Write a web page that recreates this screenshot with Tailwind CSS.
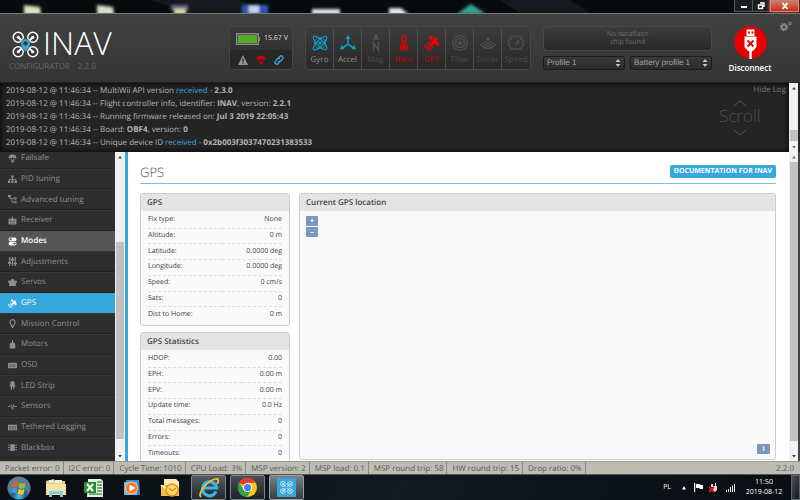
<!DOCTYPE html>
<html lang="en">
<head>
    <meta charset="UTF-8">
    <title>INAV Configurator</title>
    <script src="https://cdn.jsdelivr.net/npm/@tailwindcss/browser@4"></script>
</head>
<body class="h-screen flex flex-col overflow-hidden bg-[#0a0e13] font-['Open_Sans',sans-serif] [text-rendering:geometricPrecision] text-[8px] leading-[12px] text-[#424242]">

    <!-- Shared symbols -->
    <svg class="hidden">
        <symbol id="quad" viewBox="0 0 26 26">
            <g fill="none" stroke="currentColor" stroke-width="1.4">
                <circle cx="6" cy="6" r="4.8"/><circle cx="20" cy="6" r="4.8"/><circle cx="6" cy="20" r="4.8"/><circle cx="20" cy="20" r="4.8"/>
                <path d="M6 6l5 5M20 6l-5 5M6 20l5-5M20 20l-5-5" stroke-width="1.8"/>
            </g>
            <g fill="currentColor"><circle cx="6" cy="6" r="1.5"/><circle cx="20" cy="6" r="1.5"/><circle cx="6" cy="20" r="1.5"/><circle cx="20" cy="20" r="1.5"/></g>
        </symbol>
        <symbol id="satellite" viewBox="0 0 16 16">
            <g fill="currentColor"><path d="M4.500 2.500L7 0l3 3-2.500 2.500zM10.500 8.500L13 6l3 3-2.500 2.500zM6.500 7.500L12 2l2.500 2.500L9 10z"/><path d="M4 6a6 6 0 0 0 6.500 6.500z"/></g>
            <path d="M3 9a4.500 4.500 0 0 0 4 4.500M.7 9.500a6.500 6.500 0 0 0 6 6" fill="none" stroke="currentColor" stroke-width="1.300"/>
        </symbol>
        <symbol id="parachute" viewBox="0 0 16 16">
            <path fill="currentColor" d="M1 6.500C1 3 4 1 8 1s7 2 7 5.500l-1.500 1-1.800-1.200-1.800 1.200L8 6.300 6.100 7.500 4.300 6.300 2.500 7.500z"/>
            <path d="M2 7.500L7 13M14 7.500L9 13M6 8l1.500 5M10 8l-1.500 5" stroke="currentColor" fill="none"/>
            <path fill="currentColor" d="M6 11.500h4V15H6z"/>
        </symbol>
    </svg>

    <!-- Window title bar -->
    <div class="h-[13px] shrink-0 flex justify-end bg-[#080b0e] relative overflow-hidden">
        <svg class="absolute left-0 top-0 w-[800px] h-[13px]" viewBox="0 0 800 13">
            <defs><filter id="soft"><feGaussianBlur stdDeviation="1.500"/></filter></defs>
            <path d="M150 0h90l30 13h-80zM500 0h70l20 13h-70z" fill="#14191e"/>
            <g filter="url(#soft)">
                <path d="M24 5l16 2 1 8H24zM97 5l16 2 1 8H97z" fill="#d3e2c6"/>
                <path d="M171 5h17v5h-17z" fill="#6f6a91"/><path d="M174 9h12v6h-12z" fill="#d5dc9a"/>
                <path d="M242 5h26v9h-26z" fill="#2f55b5"/><path d="M249 5h10v9h-10z" fill="#c5d4f5"/>
                <path d="M312 9h28v6h-28z" fill="#d5e6ed"/>
                <path d="M389 8h12l8 7h-20z" fill="#dce8f2"/>
                <path d="M457 14l14-10 15 10z" fill="#31a69c"/>
            </g>
        </svg>
        <button aria-label="Minimize" class="relative w-[19px] h-3 border border-t-0 border-[#55585b] bg-[#1c1f22] flex items-center justify-center"><svg class="w-2 h-2" viewBox="0 0 8 8"><path d="M1 4h6v2H1z" fill="#fff"/></svg></button>
        <button aria-label="Restore" class="relative w-[17px] h-3 border border-t-0 border-l-0 border-[#55585b] bg-[#1c1f22] flex items-center justify-center"><svg class="w-2 h-2" viewBox="0 0 8 8"><path d="M3 1h4v4M1.500 3h4v3.500h-4z" fill="none" stroke="#fff" stroke-width="1.400"/></svg></button>
        <button aria-label="Close" class="relative w-[29px] h-3 mr-px border border-t-0 border-[#d98a78] bg-linear-to-b from-[#c98374] to-[#c9220c] shadow-[0_0_5px_#e2563c] flex items-center justify-center"><svg class="w-2 h-2" viewBox="0 0 8 8"><path d="M1.500 1l5 6M6.500 1l-5 6" stroke="#fff" stroke-width="1.800"/></svg></button>
    </div>

    <!-- Header -->
    <header class="h-[70px] shrink-0 flex items-start pt-3 pl-3 pr-2 bg-linear-to-b from-[#404240] to-[#343534] border-t border-[#777] border-b border-b-[#222]">
        <div class="flex-1 pt-1">
            <div class="flex items-center gap-1 text-white">
                <svg class="w-[27px] h-[27px]" viewBox="0 0 26 26"><use href="#quad"/><path fill="#37a8db" stroke="#3a3b3a" stroke-width=".6" fill-rule="evenodd" d="M13 7.500a4.600 4.600 0 0 0-4.600 4.600c0 3.300 4.600 8.200 4.600 8.200s4.600-4.900 4.600-8.200A4.600 4.600 0 0 0 13 7.500zm0 2.500a1.900 1.900 0 1 1 0 3.800 1.900 1.900 0 0 1 0-3.800z"/></svg>
                <span class="text-[32px] leading-[28px] font-light">INAV</span>
            </div>
            <div class="-ml-[3px] pt-1 flex gap-2 text-[#6a6a6a] leading-[10px]"><span>CONFIGURATOR</span><span>2.2.0</span></div>
        </div>

        <div class="w-16 h-11 mr-3 rounded bg-linear-to-b from-[#393939] to-[#2a2a2a] border border-[#454545] overflow-hidden">
            <div class="h-6 flex items-center pl-[6px] gap-1 text-[7px] text-[#ddd] whitespace-nowrap">
                <svg class="w-6 h-3 shrink-0" viewBox="0 0 24 12"><path d="M.75.75h21.500v10.500H.75z" fill="#222" stroke="#8b8b8b" stroke-width="1.500"/><path d="M2 2h19v8H2z" fill="#59aa29"/><path d="M22.500 4H24v4h-1.500z" fill="#8b8b8b"/></svg>
                <span>15.67 V</span>
            </div>
            <div class="h-5 -mt-px flex items-center justify-center gap-2 bg-[#272727]">
                <svg class="w-[10px] h-[10px]" viewBox="0 0 10 10"><path d="M5 0l5 10H0z" fill="#929292"/><path d="M5 3.500v3.200M5 7.500v1.300" stroke="#222" stroke-width="1.200"/></svg>
                <svg class="w-[10px] h-[10px] text-[#d40000]"><use href="#parachute"/></svg>
                <svg class="w-[10px] h-[10px]" viewBox="0 0 10 10" fill="none" stroke="#37a8db" stroke-width="1.300"><path d="M4.300 3.200l1.500-1.700a1.800 1.800 0 0 1 2.700 2.600L6.600 6.200a1.800 1.800 0 0 1-2.500-.2M5.700 6.800L4.200 8.500a1.800 1.800 0 0 1-2.700-2.600l1.900-2.100a1.800 1.800 0 0 1 2.500.2"/></svg>
            </div>
        </div>

        <ul class="h-11 mr-3 flex rounded bg-linear-to-b from-[#3c3c3c] to-[#282828] border border-[#484848] divide-x divide-[#4b4b4b] text-[#4b4b4b] text-center overflow-hidden">
            <li class="w-7 flex flex-col items-center pt-2 gap-[3px] text-[#8c8c8c]">
                <svg class="w-4 h-4 shrink-0" viewBox="0 0 16 16" fill="none" stroke="#07a0c8" stroke-width="1.200"><ellipse cx="8" cy="8" rx="3" ry="9" transform="rotate(45 8 8)"/><ellipse cx="8" cy="8" rx="3" ry="9" transform="rotate(-45 8 8)"/><path d="M8 2.500a5.500 5.500 0 0 0 0 11 5.500 5.500 0 0 0 0-11z" stroke-width=".8"/><circle cx="8" cy="8" r="1" fill="#07a0c8"/></svg>Gyro
            </li>
            <li class="w-7 flex flex-col items-center pt-2 gap-[3px] text-[#8c8c8c]">
                <svg class="w-4 h-4 shrink-0" viewBox="0 0 16 16" fill="#07a0c8"><path d="M7.300 3h1.400v6H7.300z"/><path d="M8 0l2.500 4h-5zM0 14.500l1.500-4.500 3 4zM16 14.500l-1.500-4.500-3 4z"/><path d="M2.500 13L8 9l5.500 4" fill="none" stroke="#07a0c8" stroke-width="1.600"/></svg>Accel
            </li>
            <li class="w-7 flex flex-col items-center pt-2 gap-[3px]">
                <svg class="w-4 h-4 shrink-0 overflow-visible" viewBox="0 0 16 16"><path d="M8-2l3.500 6.500h-7z" fill="#4f4f4f"/><path d="M5.500 16V7.500l5 8V7" fill="none" stroke="#4f4f4f" stroke-width="1.500"/></svg>Mag
            </li>
            <li class="w-7 flex flex-col items-center pt-2 gap-[3px] text-[#c40000]">
                <svg class="w-4 h-4 shrink-0" viewBox="0 0 16 16"><path d="M6 9.500V2.200a2 2 0 0 1 4 0v7.300a3.600 3.600 0 1 1-4 0z" fill="none" stroke="#f00000" stroke-width="1.300"/><circle cx="8" cy="12.300" r="2" fill="#f00000"/><path d="M8 5v7" stroke="#f00000" stroke-width="1.200"/></svg>Baro
            </li>
            <li class="w-7 flex flex-col items-center pt-2 gap-[3px] text-[#c40000]">
                <svg class="w-4 h-4 shrink-0 text-[#f00000]"><use href="#satellite"/></svg>GPS
            </li>
            <li class="w-7 flex flex-col items-center pt-2 gap-[3px]">
                <svg class="w-4 h-4 shrink-0" viewBox="0 0 16 16" fill="none" stroke="#4f4f4f"><circle cx="8" cy="8" r="7.200" stroke-width="1.300"/><circle cx="8" cy="8" r="4.500" stroke-width="1.500"/><circle cx="8" cy="8" r="1.800" fill="#4f4f4f"/></svg>Flow
            </li>
            <li class="w-7 flex flex-col items-center pt-2 gap-[3px]">
                <svg class="w-4 h-4 shrink-0" viewBox="0 0 16 16" fill="none" stroke="#4f4f4f" stroke-width="1.400"><path d="M0 8c3.500 7 12.500 7 16 0M2.500 7c2.500 5 8.500 5 11 0M5 6c1.500 3 4.500 3 6 0"/><circle cx="8" cy="4" r="1" fill="#4f4f4f"/></svg>Sonar
            </li>
            <li class="w-7 flex flex-col items-center pt-2 gap-[3px]">
                <svg class="w-4 h-4 shrink-0" viewBox="0 0 16 16" fill="none" stroke="#4f4f4f"><path d="M4 14a7.200 7.200 0 1 1 8 0z" stroke-width="1.400"/><path d="M8 9.500L11 5" stroke-width="2"/><path d="M3 8h1.500M8 2.500V4M4.500 4.500l1 1M11.500 8H13"/></svg>Speed
            </li>
        </ul>

        <div class="w-[169px] mr-[14px] flex flex-col gap-[5px]">
            <div class="h-[25px] rounded border border-[#484848] bg-linear-to-b from-[#3c3c3c] to-[#282828] text-[#6b6b6b] text-[7px] leading-[8px] text-center flex items-center justify-center">No dataflash<br>chip found</div>
            <div class="grid grid-cols-2 gap-[5px]">
                <div class="relative">
                    <select aria-label="Profile" class="block appearance-none w-full h-[14px] pl-[3px] rounded-[2px] border border-[#1c1c1c] bg-linear-to-b from-[#393939] to-[#2b2b2b] text-[#a5a5a5] text-[8px] leading-[12px] font-['Liberation_Sans',sans-serif] [text-rendering:geometricPrecision]"><option>Profile 1</option></select>
                    <svg class="absolute right-1 top-[3px] w-[6px] h-2 pointer-events-none" viewBox="0 0 6 8"><path d="M3 0l2.500 3h-5zM3 8l2.500-3h-5z" fill="#c4c4c4"/></svg>
                </div>
                <div class="relative">
                    <select aria-label="Battery profile" class="block appearance-none w-full h-[14px] pl-[3px] rounded-[2px] border border-[#1c1c1c] bg-linear-to-b from-[#393939] to-[#2b2b2b] text-[#a5a5a5] text-[8px] leading-[12px] font-['Liberation_Sans',sans-serif] [text-rendering:geometricPrecision]"><option>Battery profile 1</option></select>
                    <svg class="absolute right-1 top-[3px] w-[6px] h-2 pointer-events-none" viewBox="0 0 6 8"><path d="M3 0l2.500 3h-5zM3 8l2.500-3h-5z" fill="#c4c4c4"/></svg>
                </div>
            </div>
        </div>

        <button class="w-12 flex flex-col items-center gap-[3px] text-white font-semibold">
            <svg class="w-[33px] h-[33px]" viewBox="0 0 33 33"><circle cx="16.500" cy="16.500" r="16.300" fill="#e60000"/><path d="M12.500 3.500h8V10h-8z" fill="#fff"/><path d="M14 5.500h2v2h-2zM17.500 5.500h2v2h-2z" fill="#e60000"/><path d="M10.500 10.500h12V21l-3.500 4h-5l-3.500-4zM15.300 24h2.500v9h-2.500z" fill="#fff"/><path d="M13.500 14.500l6 6M19.500 14.500l-6 6" stroke="#e60000" stroke-width="1.800"/></svg>
            Disconnect
        </button>
        <button aria-label="Options" class="ml-[6px] -mt-[5px]">
            <svg class="w-3 h-[10px]" viewBox="0 0 12 10" fill="none" stroke="#909090"><circle cx="4" cy="6" r="2.300" stroke-width="1.600"/><circle cx="4" cy="6" r="3.500" stroke-width="1.200" stroke-dasharray="1.400 1.350"/><circle cx="10" cy="2.500" r="1.300"/></svg>
        </button>
    </header>

    <!-- Log -->
    <section class="h-[69px] shrink-0 flex bg-[#242424]">
        <div class="flex-1 flex justify-between pl-[6px] shadow-[inset_0_0_6px_#000]">
            <div class="pt-px text-[#b5b5b5] leading-[13px]">
                <p>2019-08-12 @ 11:46:34 -- MultiWii API version <span class="text-[#37a8db]">received</span> - <b>2.3.0</b></p>
                <p>2019-08-12 @ 11:46:34 -- Flight controller info, identifier: <b>INAV</b>, version: <b>2.2.1</b></p>
                <p>2019-08-12 @ 11:46:34 -- Running firmware released on: <b>Jul 3 2019 22:05:43</b></p>
                <p>2019-08-12 @ 11:46:34 -- Board: <b>OBF4</b>, version: <b>0</b></p>
                <p>2019-08-12 @ 11:46:34 -- Unique device ID <span class="text-[#37a8db]">received</span> - <b>0x2b003f3037470231383533</b></p>
            </div>
            <div class="w-[78px] flex flex-col items-start text-[#505050]">
                <a href="#" class="self-end mr-[3px] pt-px text-[#777]">Hide Log</a>
                <div class="ml-2 mt-1 flex flex-col items-center text-[17px] leading-[20px] font-light">
                    <svg class="w-3 h-[6px]" viewBox="0 0 12 6"><path d="M0 6l6-5 6 5" fill="none" stroke="#505050"/></svg>
                    Scroll
                    <svg class="w-3 h-[6px] mt-1" viewBox="0 0 12 6"><path d="M0 0l6 5 6-5" fill="none" stroke="#505050"/></svg>
                </div>
            </div>
        </div>
        <div class="w-[9px] mr-[2px] flex flex-col items-center py-[3px] bg-[#f1f1f1]">
            <svg class="w-1 h-1" viewBox="0 0 4 4"><path d="M2 1l2 2.500H0z" fill="#444"/></svg>
            <div class="w-2 h-[11px] mt-auto mb-1 bg-[#c1c1c1]"></div>
            <svg class="w-1 h-1" viewBox="0 0 4 4"><path d="M2 3.500L4 1H0z" fill="#777"/></svg>
        </div>
    </section>

    <!-- Tabs and content -->
    <main class="flex-1 min-h-0 flex bg-white border-r-2 border-[#444]">
        <nav class="w-[115px] shrink-0 bg-[#2e2e2e] flex flex-col justify-end pb-[3px] overflow-hidden">
            <ul id="tabs" class="h-[310px] shrink-0 flex flex-col"></ul>
        </nav>
        <div class="w-[10px] shrink-0 flex flex-col items-center py-[3px] bg-[#f1f1f1]">
            <svg class="w-1 h-1" viewBox="0 0 4 4"><path d="M2 1l2 2.500H0z" fill="#444"/></svg>
            <div class="w-2 mt-auto h-[197px] mb-[15px] bg-[#c1c1c1]"></div>
            <svg class="w-1 h-1" viewBox="0 0 4 4"><path d="M2 3.500L4 1H0z" fill="#444"/></svg>
        </div>
        <div class="flex-1 min-w-0 border-l-3 border-[#37a8db] pl-3 pr-[13px] flex flex-col">
            <div class="h-8 shrink-0 flex items-center justify-between pt-2 border-b border-[#7fbfe0]">
                <h1 class="text-[13px] font-light text-[#505050]">GPS</h1>
                <a href="#" class="h-[13px] px-1 rounded-[2px] bg-[#37a8db] text-white text-[7px] leading-[13px] font-bold">DOCUMENTATION FOR INAV</a>
            </div>
            <div class="flex-1 min-h-0 pt-[9px] flex gap-[9px]">
                <div class="w-[150px] shrink-0 flex flex-col gap-[6px]">
                    <section class="shrink-0 rounded-[3px] border border-[#ccc] bg-[#f9f9f9] overflow-hidden">
                        <h2 class="h-[17px] pl-[6px] leading-[17px] bg-[#e4e4e4] font-semibold">GPS</h2>
                        <div class="px-[7px] pb-[3px] pt-[2px]"><table id="gps" class="w-full h-[109px] text-[7px] leading-[10px]"></table></div>
                    </section>
                    <section class="shrink-0 rounded-[3px] border border-[#ccc] bg-[#f9f9f9] overflow-hidden">
                        <h2 class="h-[17px] pl-[6px] leading-[17px] bg-[#e4e4e4] font-semibold">GPS Statistics</h2>
                        <div class="px-[7px] pb-[3px] pt-[2px]"><table id="stats" class="w-full h-[109px] text-[7px] leading-[10px]"></table></div>
                    </section>
                </div>
                <section class="flex-1 mb-px flex flex-col rounded-[3px] border border-[#ccc] bg-[#f9f9f9]">
                    <h2 class="h-[17px] pl-[6px] leading-[17px] bg-[#e4e4e4] font-semibold">Current GPS location</h2>
                    <div class="flex-1 p-[5px] pl-[6px] flex flex-col items-start gap-px text-white text-[7px] font-bold">
                        <button class="w-3 h-[10px] leading-[10px] rounded-t-[1px] bg-[#7b98bc]">+</button>
                        <button class="w-3 h-[10px] leading-[10px] rounded-b-[1px] bg-[#7b98bc]">–</button>
                        <button class="w-[13px] h-[10px] leading-[10px] mt-auto self-end rounded-[1px] bg-[#7b98bc]">i</button>
                    </div>
                </section>
            </div>
        </div>
        <div class="w-[9px] shrink-0 flex flex-col items-center py-[3px] bg-[#f1f1f1]">
            <svg class="w-1 h-1" viewBox="0 0 4 4"><path d="M2 1l2 2.500H0z" fill="#777"/></svg>
            <div class="w-2 flex-1 mt-[3px] mb-[13px] bg-[#c1c1c1]"></div>
            <svg class="w-1 h-1" viewBox="0 0 4 4"><path d="M2 3.500L4 1H0z" fill="#444"/></svg>
        </div>
    </main>

    <!-- Status bar -->
    <footer class="h-[14px] shrink-0 flex bg-[#bdbdb3] border-t border-[#999990] border-b border-b-[#555] text-[#5c5c56] leading-[14px] whitespace-nowrap">
        <span class="pl-[5px] pr-[3px] border-r border-[#8b8b84]">Packet error: 0</span>
        <span class="pl-[5px] pr-[3px] border-r border-[#8b8b84]">I2C error: 0</span>
        <span class="pl-[5px] pr-[3px] border-r border-[#8b8b84]">Cycle Time: 1010</span>
        <span class="pl-[5px] pr-[3px] border-r border-[#8b8b84]">CPU Load: 3%</span>
        <span class="pl-[5px] pr-[3px] border-r border-[#8b8b84]">MSP version: 2</span>
        <span class="pl-[5px] pr-[3px] border-r border-[#8b8b84]">MSP load: 0.1</span>
        <span class="pl-[5px] pr-[3px] border-r border-[#8b8b84]">MSP round trip: 58</span>
        <span class="pl-[5px] pr-[3px] border-r border-[#8b8b84]">HW round trip: 15</span>
        <span class="pl-[5px] pr-[3px] border-r border-[#8b8b84]">Drop ratio: 0%</span>
        <span class="ml-auto pr-[6px]">2.2.0</span>
    </footer>

    <!-- Taskbar -->
    <div class="h-[25px] shrink-0 flex items-center bg-linear-115 from-[#0a0e13] via-[#12191f] to-[#0a0e13] text-white">
        <button aria-label="Start" class="w-[37px] flex justify-center">
            <svg class="w-6 h-6" viewBox="0 0 24 24"><defs><radialGradient id="orb" cy=".9"><stop offset="0" stop-color="#4fc3ea"/><stop offset=".6" stop-color="#1f5a92"/><stop offset="1" stop-color="#5d7d96"/></radialGradient></defs><circle cx="12" cy="12" r="11.500" fill="url(#orb)"/><path d="M6 6.500c2-1 4-1 5.500 0l-1 5c-2-1-3.500-1-5.500 0z" fill="#e8602c"/><path d="M12.500 7c2 1 4 1 6 0l-1 5c-2 1-4 1-6 0z" fill="#8cc63e"/><path d="M5 12.500c2-1 3.500-1 5.500 0l-1 5c-2-1-3.500-1-5.500 0z" fill="#3d9be0"/><path d="M11.500 13c2 1 4 1 6 0l-1 5c-2 1-4 1-6 0z" fill="#fbc62b"/></svg>
        </button>
        <button aria-label="Explorer" class="w-[38px] flex justify-center">
            <svg class="w-[22px] h-5" viewBox="0 0 22 20"><path d="M1 3l8-2 1 2h10v14H1z" fill="#e8cd80"/><path d="M4 2h4v3H4zM10 2h7v3h-7z" fill="#e8f2e4"/><path d="M1 6h20v11H1z" fill="#f5e3a5"/><path d="M4 19v-6h14v6h-3v-3H7v3z" fill="#8bc8e8"/></svg>
        </button>
        <button aria-label="Excel" class="w-[38px] flex justify-center">
            <svg class="w-5 h-5" viewBox="0 0 20 20"><path d="M4 1h13l2 2v16H3z" fill="#e3f0dc"/><path d="M13 4h5M13 7h5M13 10h5M13 13h5M5 16h13" stroke="#4d9848" stroke-width="1.500"/><path d="M0 4h12v11H0z" fill="#2d8a3a"/><path d="M3 6l6 7M9 6l-6 7" stroke="#fff" stroke-width="2"/></svg>
        </button>
        <button aria-label="Media Player" class="w-[38px] flex justify-center">
            <svg class="w-[18px] h-[18px]" viewBox="0 0 18 18"><path d="M3 1h13l1 15H4z" fill="#4a86b8"/><path d="M1 3h13v13H1z" fill="#75b4df"/><circle cx="8.500" cy="9" r="6" fill="#f07a1c" stroke="#dfe9f0" stroke-width=".8"/><path d="M6.500 5.500v7l6-3.500z" fill="#fff"/></svg>
        </button>
        <button aria-label="Outlook" class="w-[38px] flex justify-center">
            <svg class="w-5 h-5" viewBox="0 0 20 20"><path d="M4 1h12l3 3v10H4z" fill="#fbe9b6"/><path d="M1 7h18v11H1z" fill="#f4bd46"/><path d="M1 7l9 6 9-6" fill="none" stroke="#fff2cc" stroke-width="1.500"/><circle cx="12" cy="12" r="6" fill="#fcd763" stroke="#d99318" stroke-width="1.500"/><path d="M9 10l3 3 4-3" fill="none" stroke="#b97412"/></svg>
        </button>
        <button aria-label="Internet Explorer" class="w-[35px] h-[25px] mx-[2px] border border-[#7d848a] rounded-[2px] bg-linear-to-b from-[#555c62] to-[#22282d] flex items-center justify-center">
            <svg class="w-[22px] h-[22px]" viewBox="0 0 22 22" fill="none"><path d="M18 14.500a7 7 0 1 1 .5-3.500H6" stroke="#39b5ec" stroke-width="3.200"/><path d="M3 20C-1 17 9 4 17 2c4-1 4 2 2 5" stroke="#f5c52c" stroke-width="1.800"/></svg>
        </button>
        <button aria-label="Chrome" class="w-[35px] h-[25px] mx-[2px] border border-[#7d848a] rounded-[2px] bg-linear-to-b from-[#4a5157] to-[#1d2226] flex items-center justify-center">
            <svg class="w-[19px] h-[19px]" viewBox="0 0 20 20"><circle cx="10" cy="10" r="10" fill="#fbc719"/><path d="M10 10L1.340 5A10 10 0 0 1 18.660 5H10z" fill="#e13b2c"/><path d="M1.340 5A10 10 0 0 0 9.500 20L14 12.500 10 10 5.700 12.300z" fill="#2fa04d"/><circle cx="10" cy="10" r="4.800" fill="#fff"/><circle cx="10" cy="10" r="3.800" fill="#4284f0"/></svg>
        </button>
        <button aria-label="INAV Configurator" class="w-[35px] h-[25px] mx-[2px] border border-[#989fa5] rounded-[2px] bg-linear-to-b from-[#7b8287] to-[#363c41] flex items-center justify-center">
            <span class="w-[19px] h-[19px] p-[3px] bg-[#37a8db]"><svg class="w-[13px] h-[13px]"><use href="#quad"/></svg></span>
        </button>

        <div class="ml-auto flex items-center gap-2">
            <span class="pr-[3px] text-[7px]">PL</span>
            <svg class="w-1 h-1" viewBox="0 0 4 4"><path d="M2 0l2 3.500H0z" fill="#fff"/></svg>
            <svg class="w-[9px] h-[9px]" viewBox="0 0 9 9"><path d="M0 0h1.200v9H0zM2 1h3.500l1 1H9v4H6L5 5H2z" fill="#fff"/></svg>
            <svg class="w-[9px] h-[10px] -ml-[2px]" viewBox="0 0 9 10"><path d="M2 1h2v2h2V0h1v3h1v4L6 9H4V4H2z" fill="#ddd"/><path d="M0 4l5 5M5 4L0 9" stroke="#e01818" stroke-width="1.800"/></svg>
            <svg class="w-[9px] h-2" viewBox="0 0 9 8"><path d="M0 6h1v2H0zM2 5h1v3H2zM4 3h1v5H4zM6 1.500h1V8H6zM8 0h1v8H8z" fill="#eee"/></svg>
            <div class="w-[38px] mx-[2px] text-center text-[7px] leading-[10px] whitespace-nowrap">11:50<br>2019-08-12</div>
            <button aria-label="Show desktop" class="w-[9px] h-[25px] -ml-[2px] border border-[#5d656b] bg-linear-to-br from-[#4a5258] to-[#15191d]"></button>
        </div>
    </div>

    <script>
        // label, icon body, state
        var tabs = [
            ['Failsafe', '<use href="#parachute"/>'],
            ['PID tuning', '<path d="M6 1h4v4H6zM0 10h4v4H0zM6 10h4v4H6zM12 10h4v4h-4z"/><path d="M2 11V8h12v3M8 4v7" fill="none" stroke="currentColor" stroke-width="1.500"/>'],
            ['Advanced tuning', '<path d="M3 3v3h4v7h4M7 6h4" fill="none" stroke="currentColor" stroke-width="1.500"/><path d="M0 0h5v4H0z"/><path d="M11.500 4.500h3v3h-3zM11.500 11h3v3h-3z" fill="none" stroke="currentColor" stroke-width="1.500"/>'],
            ['Receiver', '<path d="M7 1h2v4h6v10H1V5h6z"/><path d="M4 8h2v2H4zM10 8h2v2h-2zM4 12h8v1H4z" fill="#2e2e2e"/>'],
            ['Modes', '<rect x="1" y="1" width="14" height="6.500" rx="3"/><rect x="1" y="8.500" width="14" height="6.500" rx="3"/><circle cx="4.500" cy="4.200" r="2" fill="#555"/><circle cx="11.500" cy="11.700" r="2" fill="#555"/>', 'hover'],
            ['Adjustments', '<path d="M2 0h2v16H2zM7 0h2v16H7zM12 0h2v16h-2zM0 9h6v3H0zM5 3h6v3H5zM10 10h6v3h-6z"/>'],
            ['Servos', '<path d="M0 5h5V3l3-2 3 2v2h5v3h-2v6H2V8H0z"/>'],
            ['GPS', '<use href="#satellite"/>', 'active'],
            ['Mission Control', '<path d="M8 1a4.500 4.500 0 0 0-4.500 4.500C3.500 8.500 6 10 8 15c2-5 4.500-6.500 4.500-9.500A4.500 4.500 0 0 0 8 1z" fill="none" stroke="currentColor" stroke-width="2"/>'],
            ['Motors', '<path d="M7 0h2v5h3v3h1v7H3V8h1V5h3z"/>'],
            ['OSD', '<rect y="3" width="16" height="10" rx="2"/><path d="M2 7h12M2 9.500h12" stroke="#2e2e2e" stroke-dasharray="3 1"/>'],
            ['LED Strip', '<path d="M4 8V4a4 4 0 0 1 8 0v4h1v2H3V8zM5 10h2v6H5zM9 10h2v4H9z"/>'],
            ['Sensors', '<path d="M0 8h4l2-3 2 8 2-8 1.500 3H16" fill="none" stroke="currentColor" stroke-width="1.500"/>'],
            ['Tethered Logging', '<path d="M0 3h16v10H0z"/><path d="M2 6h3v2H2zM7 6h3v2H7zM12 6h2v2h-2zM2 10h12v1H2z" fill="#2e2e2e"/>'],
            ['Blackbox', '<path d="M4 2h8v12H4zM0 3h3v2H0zM0 7h3v2H0zM0 11h3v2H0zM13 3h3v2h-3zM13 7h3v2h-3zM13 11h3v2h-3z"/>']
        ];

        var stateClass = {
            hover: 'bg-[#555] text-white font-semibold',
            active: 'bg-[#37a8db] text-white',
            normal: 'text-[#8f8f8f] border-b border-b-[#222] border-t border-t-[#383838]'
        };

        document.getElementById('tabs').innerHTML = tabs.map(function(tab) {
            return '<li class="flex-1 flex">' +
                '<a href="#" class="flex-1 flex items-center pl-2 gap-1 ' + stateClass[tab[2] || 'normal'] + '">' +
                '<svg class="w-[9px] h-[9px]" viewBox="0 0 16 16" fill="currentColor">' + tab[1] + '</svg>' + tab[0] +
                '</a></li>';
        }).join('');

        function fillTable(id, rows) {
            document.getElementById(id).innerHTML = rows.map(function(row, i) {
                var line = i < rows.length - 1 ? 'border-b border-dashed border-[#ddd]' : '';
                return '<tr class="' + line + '"><th scope="row" class="text-left font-normal">' + row[0] + ':</th>' +
                    '<td class="text-right">' + row[1] + '</td></tr>';
            }).join('');
        }

        fillTable('gps', [['Fix type', 'None'], ['Altitude', '0 m'], ['Latitude', '0.0000 deg'], ['Longitude', '0.0000 deg'], ['Speed', '0 cm/s'], ['Sats', '0'], ['Dist to Home', '0 m']]);
        fillTable('stats', [['HDOP', '0.00'], ['EPH', '0.00 m'], ['EPV', '0.00 m'], ['Update time', '0.0 Hz'], ['Total messages', '0'], ['Errors', '0'], ['Timeouts', '0']]);
    </script>
</body>
</html>
